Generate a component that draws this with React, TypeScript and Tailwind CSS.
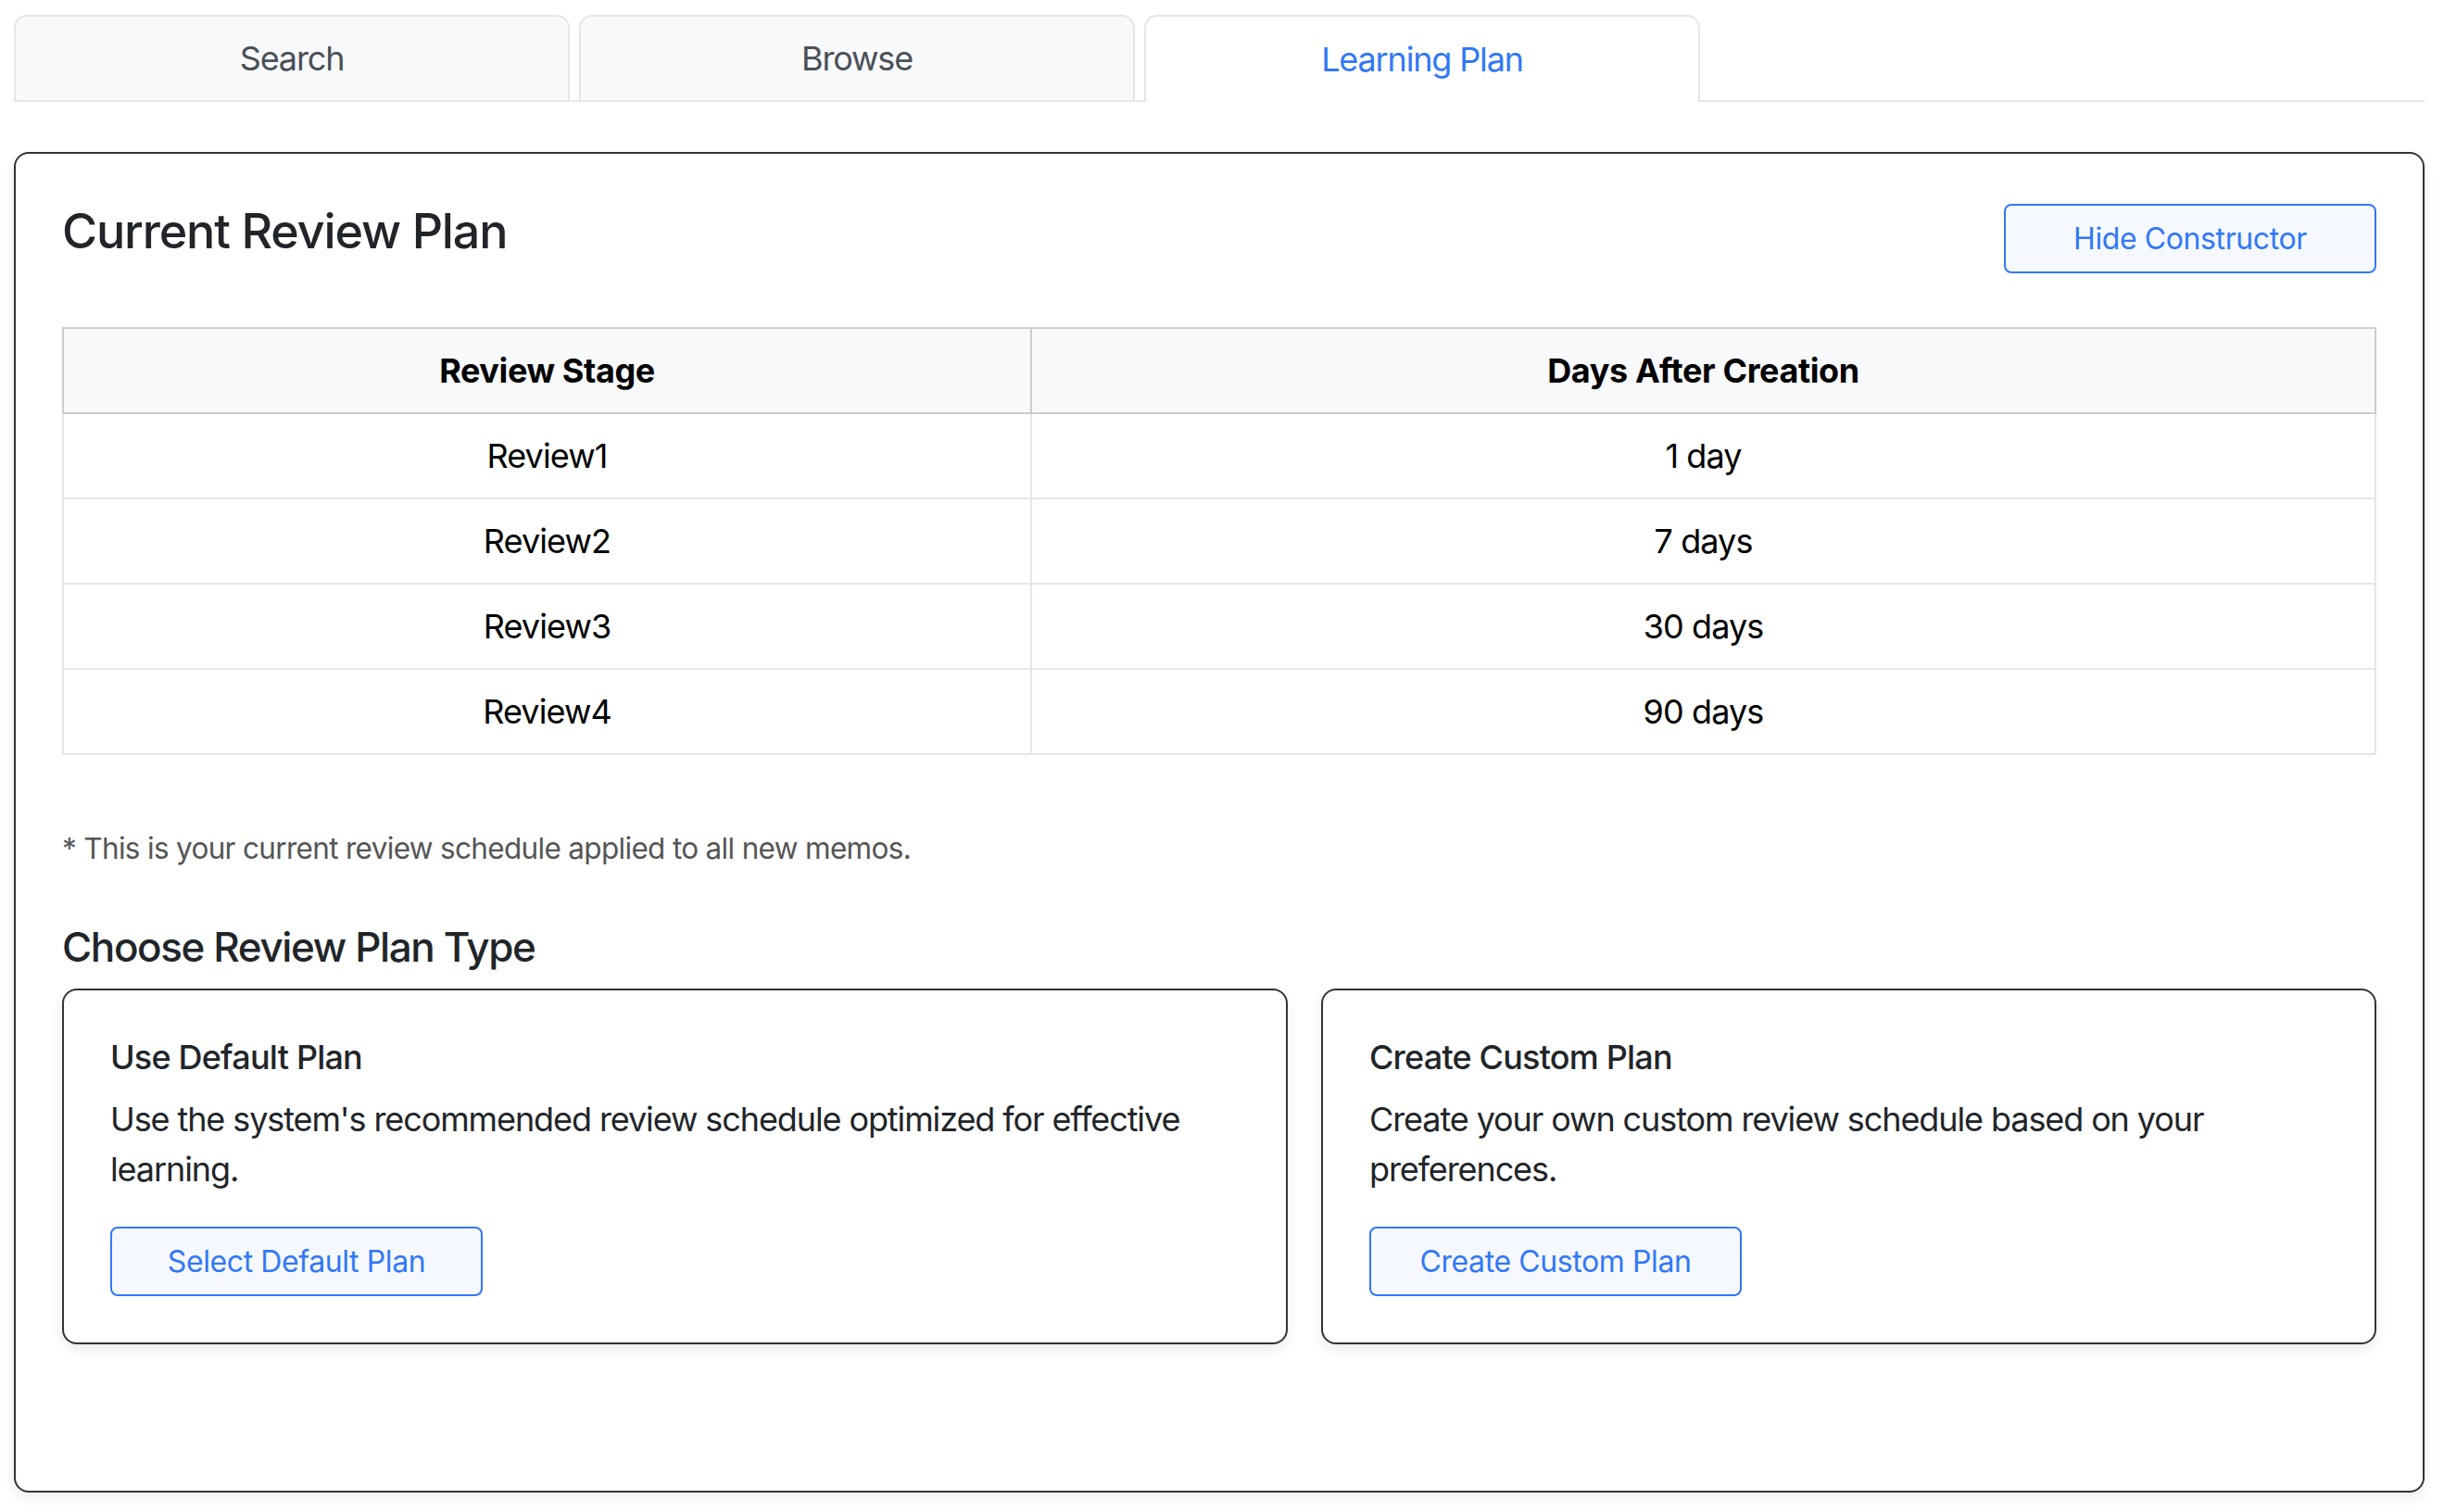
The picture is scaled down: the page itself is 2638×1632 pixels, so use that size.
const font = "font-['Inter','Liberation_Sans',sans-serif]";

const rows = [
  ["Review1", "1 day"],
  ["Review2", "7 days"],
  ["Review3", "30 days"],
  ["Review4", "90 days"],
];

function Tab({ label, active }: { label: string; active?: boolean }) {
  if (active) {
    return (
      <div className="relative -mb-[2px] flex h-[94px] w-[600px] items-center justify-center rounded-t-[14px] border-2 border-b-0 border-[#e3e6ea] bg-white text-[36px] tracking-[-1.15px] text-[#3178f6]">
        {label}
      </div>
    );
  }
  return (
    <div className="flex h-[92px] w-[600px] items-center justify-center rounded-t-[14px] border-2 border-b-0 border-[#e3e6ea] bg-[#f8f9fb] text-[36px] tracking-[-1.15px] text-[#495057]">
      {label}
    </div>
  );
}

function OutlineButton({ label, className }: { label: string; className: string }) {
  return (
    <button className={`flex h-[75px] items-center justify-center rounded-[8px] border-2 border-[#3178f6] bg-[#f5f8ff] text-[32px] tracking-[-0.4px] text-[#3178f6] ${className}`}>
      {label}
    </button>
  );
}

function PlanCard({ title, text, button, className }: { title: string; text: string; button: string; className: string }) {
  return (
    <div className={`rounded-[16px] border-2 border-[#333333] bg-white px-[50px] pt-[50px] shadow-[0_6px_14px_rgba(0,0,0,0.08)] ${className}`}>
      <h5 className="text-[36px] leading-[44px] font-medium tracking-[-0.8px] text-[#212529]">{title}</h5>
      <p className="mt-[18px] text-[36px] leading-[54px] tracking-[-1.1px] text-[#212529]">{text}</p>
      <OutlineButton label={button} className="mt-[35px] w-[402px]" />
    </div>
  );
}

export default function App() {
  return (
    <div className={`min-h-screen bg-white pt-[16px] pr-[21px] pl-[15px] ${font}`}>
      {/* Tabs */}
      <div className="flex gap-[10px] border-b-2 border-[#e3e6ea]">
        <Tab label="Search" />
        <Tab label="Browse" />
        <Tab label="Learning Plan" active />
      </div>

      {/* Panel */}
      <div className="mt-[54px] h-[1447px] rounded-[16px] border-2 border-[#333333] bg-white px-[50px] pt-[50px] shadow-[0_6px_14px_rgba(0,0,0,0.08)]">
        <div className="flex items-start justify-between">
          <h2 className="mt-[2px] text-[52px] leading-[64px] font-medium tracking-[-1.15px] text-[#212529]">Current Review Plan</h2>
          <OutlineButton label="Hide Constructor" className="mt-[4px] w-[402px]" />
        </div>

        <table className="mt-[58px] w-full table-fixed border-collapse text-[36px] text-black">
          <thead>
            <tr className="h-[92px] bg-[#f8f9fb]">
              <th className="w-[1045px] border-2 border-[#c9ccd0] font-bold tracking-[-0.4px]">Review Stage</th>
              <th className="border-2 border-[#c9ccd0] font-bold tracking-[-0.4px]">Days After Creation</th>
            </tr>
          </thead>
          <tbody>
            {rows.map(([stage, days]) => (
              <tr key={stage} className="h-[92px]">
                <td className="border-2 border-[#e3e6ea] text-center tracking-[-0.9px]">{stage}</td>
                <td className="border-2 border-[#e3e6ea] text-center tracking-[-0.9px]">{days}</td>
              </tr>
            ))}
          </tbody>
        </table>

        <p className="mt-[77px] text-[31.5px] tracking-[-0.68px] text-[#555555]">* This is your current review schedule applied to all new memos.</p>

        <h4 className="mt-[56px] text-[44px] leading-[54px] font-medium tracking-[-1.4px] text-[#212529]">Choose Review Plan Type</h4>

        <div className="mt-[18px] flex h-[384px] gap-[36px]">
          <PlanCard
            className="w-[1323px]"
            title="Use Default Plan"
            text="Use the system's recommended review schedule optimized for effective learning."
            button="Select Default Plan"
          />
          <PlanCard
            className="flex-1"
            title="Create Custom Plan"
            text="Create your own custom review schedule based on your preferences."
            button="Create Custom Plan"
          />
        </div>
      </div>
    </div>
  );
}
